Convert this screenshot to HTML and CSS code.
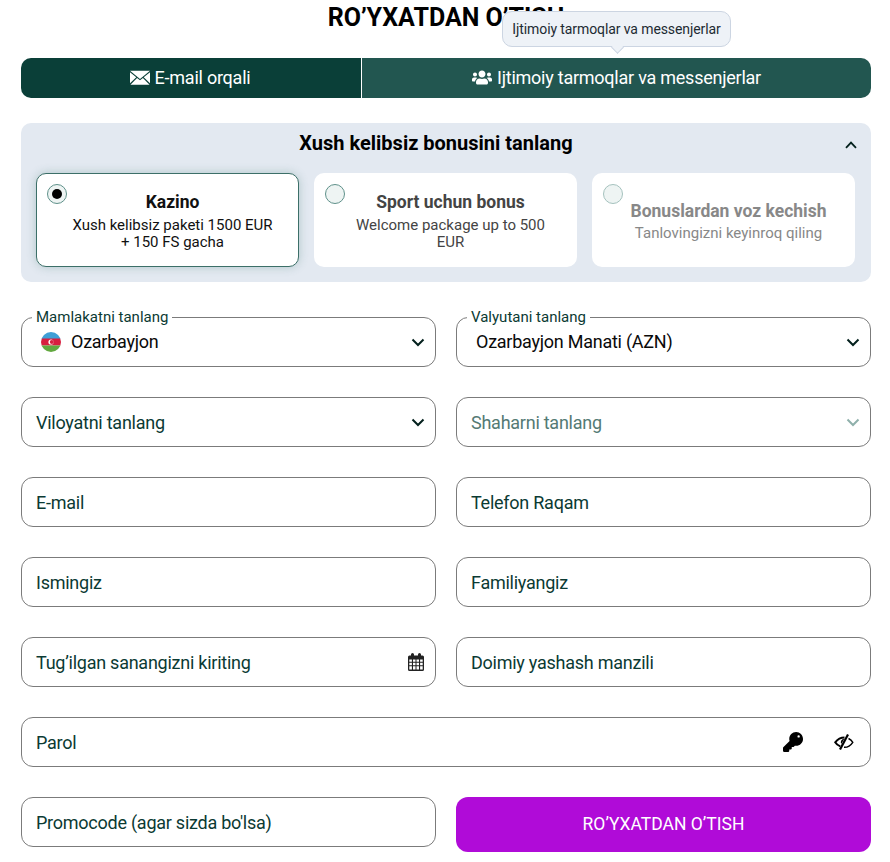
FILE: index.html
```html
<!DOCTYPE html>
<html>
<head>
    <meta charset="utf-8">
    <title>Ro'yxatdan o'tish</title>
    <meta name="viewport" content="width=device-width, initial-scale=1.0">
    <link rel="stylesheet" href="styles.css">
</head>
<body>
    <div class="wrap">
        <h1>RO’YXATDAN O’TISH</h1>

        <div class="tabs">
            <div class="tab active">
                <svg class="tab-icon" width="20" height="15" viewBox="0 0 21 15">
                    <path fill="#fff" d="M0 0.5h21L10.5 9z"/>
                    <path fill="#fff" d="M0 2v11.5L6.6 7.3zM21 2v11.5L14.4 7.3zM7.4 8L10.5 10.5 13.6 8 20.5 15H0.5z"/>
                </svg>
                <span>E-mail orqali</span>
            </div>
            <div class="tab">
                <svg class="tab-icon" width="20" height="17" viewBox="0 0 640 512">
                    <path fill="#fff" d="M96 224c35.3 0 64-28.7 64-64s-28.7-64-64-64-64 28.7-64 64 28.7 64 64 64zm448 0c35.3 0 64-28.7 64-64s-28.7-64-64-64-64 28.7-64 64 28.7 64 64 64zm32 32h-64c-17.6 0-33.5 7.1-45.1 18.6 40.3 22.1 68.9 62 75.1 109.4h66c17.7 0 32-14.3 32-32v-32c0-35.3-28.7-64-64-64zm-256 0c61.9 0 112-50.1 112-112S381.9 32 320 32 208 82.1 208 144s50.1 112 112 112zm76.8 32h-8.3c-20.8 10-43.9 16-68.5 16s-47.6-6-68.5-16h-8.3C179.6 288 128 339.6 128 403.2V432c0 26.5 21.5 48 48 48h288c26.5 0 48-21.5 48-48v-28.8c0-63.6-51.6-115.2-115.2-115.2zm-223.7-13.4C161.5 263.1 145.6 256 128 256H64c-35.3 0-64 28.7-64 64v32c0 17.7 14.3 32 32 32h65.9c6.3-47.4 34.9-87.3 75.2-109.4z"/>
                </svg>
                <span>Ijtimoiy tarmoqlar va messenjerlar</span>
                <div class="tooltip">Ijtimoiy tarmoqlar va messenjerlar</div>
            </div>
        </div>

        <div class="bonus">
            <div class="bonus-head">
                <h2>Xush kelibsiz bonusini tanlang</h2>
                <svg class="bonus-toggle" width="12" height="8" viewBox="0 0 12 8">
                    <path d="M1 6.8L6 1.6l5 5.2" fill="none" stroke="#04211d" stroke-width="1.8"/>
                </svg>
            </div>
            <div class="bonus-list">
                <div class="card selected">
                    <span class="radio"></span>
                    <div class="card-title">Kazino</div>
                    <div class="card-text">Xush kelibsiz paketi 1500 EUR + 150 FS gacha</div>
                </div>
                <div class="card muted">
                    <span class="radio"></span>
                    <div class="card-title">Sport uchun bonus</div>
                    <div class="card-text">Welcome package up to 500 EUR</div>
                </div>
                <div class="card off">
                    <span class="radio"></span>
                    <div class="card-title">Bonuslardan voz kechish</div>
                    <div class="card-text">Tanlovingizni keyinroq qiling</div>
                </div>
            </div>
        </div>

        <div class="form">
            <div class="field filled">
                <span class="field-label">Mamlakatni tanlang</span>
                <svg class="flag" width="20" height="20" viewBox="0 0 20 20">
                    <clipPath id="flag-clip"><circle cx="10" cy="10" r="10"/></clipPath>
                    <g clip-path="url(#flag-clip)">
                        <rect width="20" height="7" fill="#3f9fd6"/>
                        <rect y="6.5" width="20" height="7" fill="#d81e3f"/>
                        <rect y="13.5" width="20" height="6.5" fill="#62a83f"/>
                        <circle cx="10" cy="10" r="2.6" fill="#fff"/>
                        <circle cx="10.8" cy="10" r="2" fill="#d81e3f"/>
                    </g>
                </svg>
                <span class="value">Ozarbayjon</span>
                <svg class="arrow" width="14" height="9" viewBox="0 0 14 9"><path d="M1.5 1.5L7 7l5.5-5.5" fill="none" stroke="#04211d" stroke-width="2"/></svg>
            </div>
            <div class="field filled indent">
                <span class="field-label">Valyutani tanlang</span>
                <span class="value">Ozarbayjon Manati (AZN)</span>
                <svg class="arrow" width="14" height="9" viewBox="0 0 14 9"><path d="M1.5 1.5L7 7l5.5-5.5" fill="none" stroke="#04211d" stroke-width="2"/></svg>
            </div>

            <div class="field">
                <span>Viloyatni tanlang</span>
                <svg class="arrow" width="14" height="9" viewBox="0 0 14 9"><path d="M1.5 1.5L7 7l5.5-5.5" fill="none" stroke="#04211d" stroke-width="2"/></svg>
            </div>
            <div class="field disabled">
                <span>Shaharni tanlang</span>
                <svg class="arrow" width="14" height="9" viewBox="0 0 14 9"><path d="M1.5 1.5L7 7l5.5-5.5" fill="none" stroke="#8fb0ab" stroke-width="2"/></svg>
            </div>

            <div class="field"><span>E-mail</span></div>
            <div class="field"><span>Telefon Raqam</span></div>
            <div class="field"><span>Ismingiz</span></div>
            <div class="field"><span>Familiyangiz</span></div>

            <div class="field">
                <span>Tug’ilgan sanangizni kiriting</span>
                <svg class="arrow calendar" width="16" height="18" viewBox="0 0 16 18">
                    <path fill="#222" fill-rule="evenodd" d="M1.500 2.500H3V1.500a1.200 1.200 0 0 1 3 0v1h4v-1a1.200 1.200 0 0 1 3 0v1h1.500A1.500 1.500 0 0 1 16 4v12.500a1.500 1.500 0 0 1-1.500 1.500h-13A1.500 1.500 0 0 1 0 16.500V4a1.500 1.500 0 0 1 1.500-1.500zM1.300 6.500v2.300h2.600V6.500zm3.700 0v2.300h2.500V6.500zm3.500 0v2.300h2.500V6.500zm3.600 0v2.300h2.600V6.500zM1.300 9.800v2.500h2.600V9.800zm3.700 0v2.500h2.500V9.800zm3.500 0v2.500h2.500V9.800zm3.600 0v2.500h2.600V9.800zM1.300 13.300v3.200h2.600v-3.200zm3.700 0v3.200h2.500v-3.200zm3.500 0v3.200h2.500v-3.200zm3.600 0v3.200h2.600v-3.200z"/>
                </svg>
            </div>
            <div class="field"><span>Doimiy yashash manzili</span></div>

            <div class="field wide">
                <span>Parol</span>
                <div class="field-icons">
                    <svg width="20" height="20" viewBox="0 0 512 512">
                        <path fill="#000" fill-rule="evenodd" d="M512 176.001C512 273.203 433.202 352 336 352c-11.22 0-22.19-1.062-32.827-3.069l-24.012 27.014A23.999 23.999 0 0 1 261.223 384H224v40c0 13.255-10.745 24-24 24h-40v40c0 13.255-10.745 24-24 24H24c-13.255 0-24-10.745-24-24v-78.059c0-6.365 2.529-12.47 7.029-16.971l161.802-161.802C163.108 213.814 160 195.271 160 176 160 78.798 238.797.001 335.999 0 433.488-.001 512 78.511 512 176.001zM370 112a30 30 0 1 0 60 0 30 30 0 1 0-60 0z"/>
                    </svg>
                    <svg width="20" height="16" viewBox="0 0 20 16">
                        <path fill="none" stroke="#000" stroke-width="2" d="M10.500 3.500C6 3.500 3 6 1.200 8.300 2.200 10 4 11.500 6.300 12.400"/>
                        <path fill="#000" d="M10.300 4.800a3.400 3.400 0 0 0-3 5.200z"/>
                        <path fill="none" stroke="#000" stroke-width="2.200" d="M14 .5L6 15.500"/>
                        <path fill="none" stroke="#000" stroke-width="1.400" d="M14.500 4.500c2 1 3.500 2.500 4.300 3.800-1.800 2.700-4.800 5.200-8.800 5"/>
                    </svg>
                </div>
            </div>

            <div class="field"><span>Promocode (agar sizda bo'lsa)</span></div>
            <div class="submit">RO’YXATDAN O’TISH</div>
        </div>
    </div>
</body>
</html>
```

FILE: styles.css
```css
body {
    font-family: "Roboto", "Liberation Sans", sans-serif;
    background: #fff;
    color: #0b3a33;
    margin: 0;
    padding: 0;
}
.wrap {
    width: 850px;
    margin-left: 21px;
}
h1 {
    margin: 0 0 22px;
    height: 36px;
    line-height: 36px;
    font-size: 25px;
    font-weight: 700;
    color: #000;
    text-align: center;
}

/* tabs */
.tabs {
    display: flex;
    height: 40px;
    margin-bottom: 25px;
}
.tab {
    position: relative;
    flex: 1;
    display: flex;
    align-items: center;
    justify-content: center;
    gap: 5px;
    padding-bottom: 1px;
    box-sizing: border-box;
    background: #225650;
    color: #fff;
    font-size: 18px;
    letter-spacing: -0.24px;
    border-radius: 0 10px 10px 0;
}
.tab.active {
    flex: 0 0 341px;
    padding-right: 2px;
    background: #0a3f38;
    border-right: 1px solid #fff;
    border-radius: 10px 0 0 10px;
}
.tooltip {
    position: absolute;
    left: 140px;
    top: -47px;
    width: 229px;
    height: 36px;
    box-sizing: border-box;
    line-height: 35px;
    text-align: center;
    font-size: 14px;
    letter-spacing: -0.1px;
    color: #1d2b33;
    background: #eef2f7;
    border: 1px solid #ccd5e2;
    border-radius: 10px;
}
.tooltip::after {
    content: "";
    position: absolute;
    left: 110px;
    bottom: -6px;
    width: 9px;
    height: 9px;
    background: #eef2f7;
    border-right: 1px solid #ccd5e2;
    border-bottom: 1px solid #ccd5e2;
    transform: rotate(45deg);
    box-sizing: border-box;
}

/* bonus block */
.bonus {
    background: #e3e9f1;
    border-radius: 10px;
    padding: 0 16px 15px 15px;
    margin-bottom: 35px;
}
.bonus-head {
    display: flex;
    align-items: center;
    height: 40px;
    margin-bottom: 10px;
}
.bonus-head h2 {
    flex: 1;
    margin: 0;
    font-size: 20px;
    font-weight: 700;
    color: #000;
    text-align: center;
}
.bonus-toggle {
    margin: 4px -2px 0 9px;
}
.bonus-list {
    display: flex;
    gap: 15px;
}
.card {
    position: relative;
    flex: 0 0 263px;
    height: 94px;
    box-sizing: border-box;
    padding: 1.5px 25px 0 35px;
    display: flex;
    flex-direction: column;
    align-items: center;
    justify-content: center;
    background: #fff;
    border-radius: 10px;
    text-align: center;
    color: #111;
}
.card.selected {
    border: 1px solid #3c6f68;
    box-shadow: 0 0 10px rgba(60, 120, 110, 0.3);
}
.card.muted {
    color: #444;
}
.card.off {
    color: #888;
}
.card-title {
    font-size: 17.5px;
    font-weight: 700;
    line-height: 22px;
}
.card-text {
    font-size: 15px;
    line-height: 17px;
    margin-top: 4px;
}
.card.off .card-title {
    margin-top: 1px;
}
.card.off .card-text {
    margin-top: 3px;
}
.radio {
    position: absolute;
    left: 11px;
    top: 11px;
    width: 20px;
    height: 20px;
    box-sizing: border-box;
    background: #eef4f3;
    border: 1px solid #5f918a;
    border-radius: 50%;
}
.card.selected .radio {
    left: 10px;
    top: 10px;
}
.card.selected .radio::after {
    content: "";
    position: absolute;
    left: 4px;
    top: 4px;
    width: 10px;
    height: 10px;
    background: #000;
    border-radius: 50%;
}
.card.off .radio {
    border-color: #a5c2be;
}

/* form */
.form {
    display: grid;
    grid-template-columns: 415px 415px;
    column-gap: 20px;
    row-gap: 30px;
    align-items: start;
}
.field {
    position: relative;
    display: flex;
    align-items: center;
    height: 50px;
    box-sizing: border-box;
    padding: 0 10px 0 14px;
    border: 1px solid #7b7b7b;
    border-radius: 12px;
    font-size: 18px;
    letter-spacing: -0.25px;
    background: #fff;
}
.field.wide {
    grid-column: 1 / 3;
}
.field.disabled {
    color: #547a74;
}
.field.filled {
    color: #0a0a0a;
}
.field.filled .value {
    margin-top: -1px;
}
.field.indent {
    padding-left: 19px;
}
.field-label {
    position: absolute;
    left: 10px;
    top: -9px;
    padding: 0 4px;
    font-size: 15px;
    letter-spacing: 0;
    line-height: 17px;
    color: #0b3a33;
    background: #fff;
}
.flag {
    margin: 0 10px 0 5px;
    filter: blur(0.4px);
}
.arrow {
    margin-left: auto;
}
.calendar {
    margin-right: 1px;
}
.field-icons {
    margin-left: auto;
    display: flex;
    align-items: center;
    gap: 31px;
    padding-right: 6px;
}

.submit {
    height: 55px;
    line-height: 55px;
    text-align: center;
    font-size: 17.5px;
    color: #fff;
    background: #b00bd8;
    border-radius: 12px;
}
```
